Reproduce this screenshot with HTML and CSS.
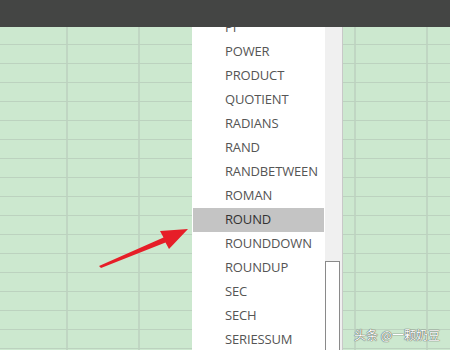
FILE: index.html
```html
<!DOCTYPE html>
<html lang="zh-CN">
<head>
  <meta charset="UTF-8" />
  <title>函数列表</title>
  <link rel="stylesheet" href="styles.css">
</head>
<body>
  <div class="topbar"></div>

  <div class="sheet">
    <div class="dropdown">
      <ul class="func-list">
        <li>PI</li>
        <li>POWER</li>
        <li>PRODUCT</li>
        <li>QUOTIENT</li>
        <li>RADIANS</li>
        <li>RAND</li>
        <li>RANDBETWEEN</li>
        <li>ROMAN</li>
        <li class="active">ROUND</li>
        <li>ROUNDDOWN</li>
        <li>ROUNDUP</li>
        <li>SEC</li>
        <li>SECH</li>
        <li>SERIESSUM</li>
      </ul>
      <div class="scroll-track">
        <div class="scroll-thumb"></div>
      </div>
    </div>

    <svg class="arrow" width="450" height="323" viewBox="0 27 450 323">
      <polygon points="99,266 163.5,237.5 160,231 188,229 169,249 165.5,242.5 101,268" fill="#e61e28" />
    </svg>

    <div class="watermark">头条 @一颗奶豆</div>
  </div>
</body>
</html>
```

FILE: styles.css
```css
body {
  margin: 0;
  width: 450px;
  height: 350px;
  overflow: hidden;
  font-family: "Open Sans", "Liberation Sans", sans-serif;
}
.topbar {
  position: relative;
  z-index: 2;
  height: 27px;
  background: #444544;
}
.sheet {
  position: relative;
  height: 323px;
  overflow: hidden;
  background-color: #cce8cf;
  background-image:
    linear-gradient(to bottom, #bcd2bf 1px, transparent 1px),
    linear-gradient(to right, #c0d6c3 2px, transparent 2px);
  background-size: 100% 19px, 72px 100%;
  background-position: 0 17px, 66px 0;
}
.dropdown {
  position: absolute;
  left: 192px;
  top: 0;
  width: 150px;
  height: 340px;
  display: flex;
  background: #fff;
  border-right: 1px solid #c8c8c8;
}
.func-list {
  list-style: none;
  margin: -11px 0 0;
  padding: 0 1px;
  width: 131px;
}
.func-list li {
  height: 24px;
  line-height: 22px;
  padding-left: 32px;
  font-size: 13px;
  letter-spacing: -0.15px;
  color: #555;
}
.func-list li.active {
  background: #c4c4c4;
  color: #333;
}
.scroll-track {
  width: 17px;
  background: #f0f0f0;
}
.scroll-thumb {
  margin-top: 234px;
  width: 13px;
  height: 120px;
  background: #fff;
  border: 1px solid #8a8a8a;
}
.arrow {
  position: absolute;
  left: 0;
  top: 0;
}
.watermark {
  position: absolute;
  right: 10px;
  bottom: 7px;
  font-family: "Noto Sans CJK SC", sans-serif;
  font-size: 12px;
  color: #fff;
  text-shadow: 0 0 1px #444, 0 0 1px #444;
}
```
